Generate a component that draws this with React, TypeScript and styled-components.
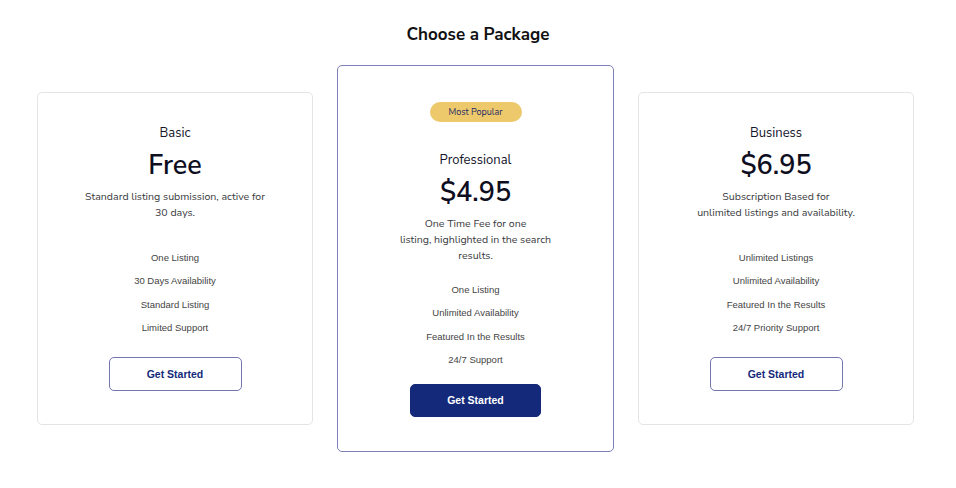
import React from "react";
import styled, { createGlobalStyle } from "styled-components";

// ---------------------------------------DATA------------------------------------------
interface Plan {
  name: string;
  price: string;
  description: string[];
  features: string[];
  featured?: boolean;
}

const plans: Plan[] = [
  {
    name: "Basic",
    price: "Free",
    description: ["Standard listing submission, active for", "30 days."],
    features: ["One Listing", "30 Days Availability", "Standard Listing", "Limited Support"]
  },
  {
    name: "Professional",
    price: "$4.95",
    description: ["One Time Fee for one", "listing, highlighted in the search", "results."],
    features: ["One Listing", "Unlimited Availability", "Featured In the Results", "24/7 Support"],
    featured: true
  },
  {
    name: "Business",
    price: "$6.95",
    description: ["Subscription Based for", "unlimited listings and availability."],
    features: ["Unlimited Listings", "Unlimited Availability", "Featured In the Results", "24/7 Priority Support"]
  }
];
//----------------------------------------------------------------------------------------

const App = () => {
  return (
    <>
      <GlobalStyle />
      <StyledPage>
        <StyledTitle>Choose a Package</StyledTitle>
        <StyledGrid>
          {plans.map(plan => (
            <StyledCard key={plan.name} featured={plan.featured}>
              {plan.featured ? <StyledBadge>Most Popular</StyledBadge> : null}
              <StyledName>{plan.name}</StyledName>
              <StyledPrice>{plan.price}</StyledPrice>
              <StyledDescription>
                {plan.description.map((line, key) => (
                  <span key={key}>{line}</span>
                ))}
              </StyledDescription>
              <StyledFeatures featured={plan.featured}>
                {plan.features.map(feature => (
                  <li key={feature}>{feature}</li>
                ))}
              </StyledFeatures>
              <StyledButton type="button" primary={plan.featured}>
                Get Started
              </StyledButton>
            </StyledCard>
          ))}
        </StyledGrid>
      </StyledPage>
    </>
  );
};

export default App;

// -------------------------------------STYLES-------------------------------------
const GlobalStyle = createGlobalStyle`
  body {
    margin: 0;
    background: #fff;
    font-family: "Nunito Sans", Lato, "Open Sans", sans-serif;
    color: #14142b;
  }
`;

const StyledPage = styled.div`
  width: 956px;
  padding: 23px 0 0;
  box-sizing: border-box;
`;

const StyledTitle = styled.h1`
  margin: 0;
  text-align: center;
  font-size: 17px;
  font-weight: 700;
  line-height: 24px;
  color: #111;
`;

const StyledGrid = styled.div`
  display: grid;
  grid-template-columns: 276px 277px 276px;
  column-gap: 24px;
  align-items: center;
  padding: 18px 0 0 37px;
`;

const StyledCard = styled.div<{ featured?: boolean }>`
  display: flex;
  flex-direction: column;
  align-items: center;
  box-sizing: border-box;
  height: ${p => (p.featured ? "387px" : "333px")};
  padding-top: ${p => (p.featured ? "36px" : "31px")};
  border: 1px solid ${p => (p.featured ? "#7b80b8" : "#e4e4e8")};
  border-radius: 5px;
  background: #fff;
`;

const StyledBadge = styled.div`
  width: 92px;
  height: 20px;
  border-radius: 10px;
  background: #eec96b;
  color: #1f2a66;
  font-size: 9px;
  line-height: 20px;
  text-align: center;
  margin-bottom: 29px;
`;

const StyledName = styled.div`
  font-size: 13px;
  line-height: 18px;
  color: #14142b;
`;

const StyledPrice = styled.div`
  margin-top: 8px;
  font-size: 27px;
  font-weight: 600;
  line-height: 31px;
  color: #0e0e1f;
`;

const StyledDescription = styled.div`
  display: flex;
  flex-direction: column;
  align-items: center;
  margin-top: 8px;
  font-size: 10.6px;
  line-height: 16px;
  color: #3a3a40;
`;

const StyledFeatures = styled.ul<{ featured?: boolean }>`
  list-style: none;
  margin: ${p => (p.featured ? "19px" : "30px")} 0 0;
  padding: 0;
  display: flex;
  flex-direction: column;
  align-items: center;
  row-gap: 9.3px;
  font-family: "Liberation Sans", Arial, sans-serif;
  font-size: 9.5px;
  line-height: 14px;
  color: #444;
`;

const StyledButton = styled.button<{ primary?: boolean }>`
  margin-top: ${p => (p.primary ? "17px" : "22px")};
  width: ${p => (p.primary ? "131px" : "133px")};
  height: ${p => (p.primary ? "33px" : "34px")};
  border-radius: 5px;
  border: 1px solid ${p => (p.primary ? "#14297a" : "#7377ad")};
  background: ${p => (p.primary ? "#14297a" : "#fff")};
  color: ${p => (p.primary ? "#fff" : "#14297a")};
  font-family: "Liberation Sans", Arial, sans-serif;
  font-size: 10.5px;
  font-weight: 700;
  cursor: pointer;
`;
